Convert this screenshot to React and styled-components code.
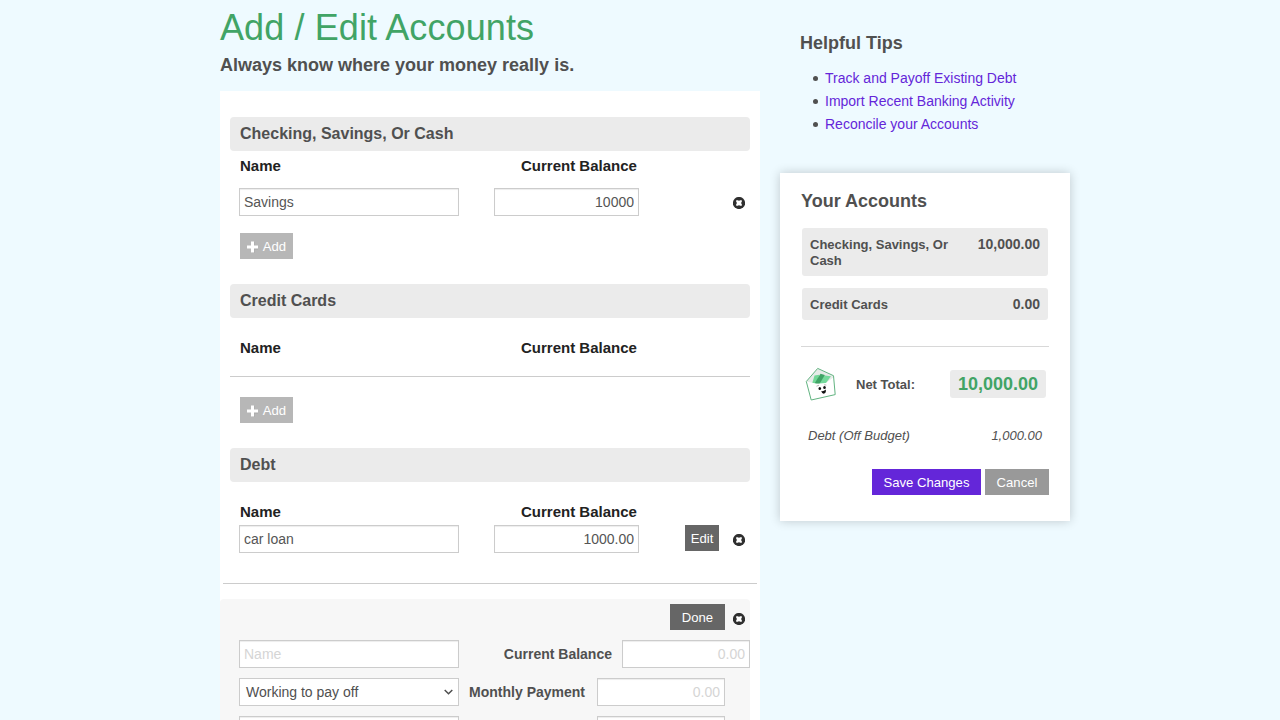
import React from "react";
import styled, { createGlobalStyle } from "styled-components";

const GlobalStyle = createGlobalStyle`
  * { box-sizing: border-box; }
  html, body, #root { height: 100%; }
  body {
    margin: 0;
    overflow: hidden;
    background: #eefaff;
    color: #505050;
    font-family: "Liberation Sans", Arial, sans-serif;
    font-size: 14px;
  }
  h1, h2, h3, ul { margin: 0; padding: 0; }
`;

const Page = styled.div`
  display: flex;
  gap: 20px;
  width: 850px;
  height: 720px;
  margin-left: 220px;
`;

const Main = styled.main`
  display: flex;
  flex-direction: column;
  width: 540px;
  height: 720px;
  flex: none;
`;

const Header = styled.header`
  height: 91px;
  flex: none;
  padding-top: 8px;
`;

const Title = styled.h1`
  font-size: 36px;
  line-height: 40px;
  font-weight: 400;
  letter-spacing: 0.1px;
  color: #41a466;
`;

const Subtitle = styled.h2`
  margin-top: 5px;
  font-size: 18px;
  line-height: 24px;
`;

const Panel = styled.div`
  display: flex;
  flex-direction: column;
  flex: 1;
  min-height: 0;
  overflow: hidden;
  background: #fff;
  padding-top: 26px;
`;

const Section = styled.section`
  flex: none;
  margin: 0 10px ${(p) => p.$bottom}px;
`;

const SectionHeading = styled.h3`
  height: 34px;
  padding-left: 10px;
  border-radius: 4px;
  background: #ebebeb;
  font-size: 16px;
  line-height: 33px;
`;

const Labels = styled.div`
  display: grid;
  grid-template-columns: 281px auto;
  padding: ${(p) => p.$top}px 10px 0;
  font-size: 15px;
  line-height: 18px;
  font-weight: 700;
  color: #222;
`;

const Row = styled.div`
  display: flex;
  align-items: center;
  height: 28px;
  margin-top: ${(p) => p.$top}px;
  padding-left: 9px;
`;

const Input = styled.input`
  width: ${(p) => p.$w}px;
  height: 28px;
  flex: none;
  margin: 0 0 0 ${(p) => p.$left || 0}px;
  padding: 0 4px;
  border: 1px solid #ccc;
  border-radius: 0;
  background: #fff;
  box-shadow: inset 0 1px 1px rgba(0, 0, 0, 0.075);
  color: #555;
  font: 14px "Liberation Sans", Arial, sans-serif;
  text-align: ${(p) => (p.$right ? "right" : "left")};
  &::placeholder { color: #d5d5d5; opacity: 1; }
`;

const tones = {
  add: "#b7b7b7",
  dark: "#666",
  primary: "#6426d9",
  muted: "#999",
};

const Button = styled.button`
  display: flex;
  align-items: center;
  justify-content: center;
  flex: none;
  width: ${(p) => p.$w}px;
  height: 26px;
  padding: 1px 0 0;
  border: 0;
  background: ${(p) => tones[p.$tone]};
  color: #fff;
  font: 13.1px/26px "Liberation Sans", Arial, sans-serif;
`;

const AddButton = styled(Button)`
  margin: ${(p) => p.$top}px 0 0 10px;
  svg { margin: 1px 4px 0 0; }
`;

const EditButton = styled(Button)`
  margin: 0 14px 2px auto;
`;

const RemoveButton = styled.span`
  display: flex;
  width: 12px;
  height: 12px;
  margin: ${(p) => p.$top}px 5px 0 ${(p) => (p.$push ? "auto" : "0")};
`;

const Divider = styled.div`
  height: 1px;
  flex: none;
  margin: ${(p) => p.$m};
  background: ${(p) => p.$color || "#ccc"};
`;

const DebtForm = styled.div`
  width: 530px;
  flex: 1;
  min-height: 0;
  overflow: hidden;
  padding: 5px 0 0 10px;
  border-radius: 4px 4px 0 0;
  background: #f7f7f7;
`;

const FormActions = styled.div`
  display: flex;
  justify-content: flex-end;
  align-items: center;
  gap: 8px;
  height: 26px;
`;

const FieldLabel = styled.label`
  width: ${(p) => p.$w}px;
  text-align: right;
  font-weight: 700;
`;

const SelectBox = styled.div`
  display: flex;
  align-items: center;
  justify-content: space-between;
  width: 220px;
  height: 28px;
  flex: none;
  padding: 0 5px 0 6px;
  border: 1px solid #ccc;
  background: #fff;
`;

const Side = styled.aside`
  width: 290px;
  flex: none;
  padding-top: 31px;
`;

const Tips = styled.section`
  height: 142px;
  padding-left: 20px;
`;

const SideHeading = styled.h3`
  font-size: 18px;
  line-height: 24px;
`;

const TipList = styled.ul`
  margin-top: 12px;
  padding-left: 13px;
  line-height: 23px;
  list-style: none;
`;

const Tip = styled.li`
  display: flex;
  align-items: center;
  &::before {
    content: "";
    width: 5px;
    height: 5px;
    margin: 0 7px 0 0;
    border-radius: 50%;
    background: #505050;
  }
`;

const TipLink = styled.a`
  color: #6426d9;
`;

const Card = styled.section`
  height: 348px;
  padding: 16px 21px 0;
  background: #fff;
  box-shadow: 0 0 10px rgba(0, 0, 0, 0.2);
`;

const Summary = styled.div`
  display: flex;
  justify-content: space-between;
  margin: ${(p) => p.$top}px 1px 0;
  padding: 8px;
  border-radius: 3px;
  background: #ebebeb;
  font-size: 13px;
  line-height: 16px;
  font-weight: 700;
`;

const SummaryName = styled.span`
  width: 145px;
  padding-top: 1px;
  margin-bottom: -1px;
`;

const SummaryAmount = styled.span`
  font-size: 14px;
`;

const NetTotal = styled.div`
  display: flex;
  align-items: center;
  height: 36px;
  margin-top: 19px;
  padding: 0 3px;
`;

const NetLabel = styled.span`
  margin: 1px auto 0 18px;
  font-size: 13px;
  font-weight: 700;
`;

const NetAmount = styled.span`
  height: 28px;
  padding: 0 8px;
  border-radius: 3px;
  background: #ebebeb;
  color: #41a466;
  font-size: 18px;
  line-height: 28px;
  font-weight: 700;
`;

const OffBudget = styled.div`
  display: flex;
  justify-content: space-between;
  margin-top: 25px;
  padding: 0 7px;
  font-size: 13px;
  line-height: 18px;
  font-style: italic;
`;

const CardActions = styled.div`
  display: flex;
  justify-content: flex-end;
  gap: 4px;
  margin-top: 24px;
`;

const Plus = () => (
  <svg width="12" height="12" viewBox="0 0 12 12">
    <path d="M4 4.500h3.500V1h-3V12h3V8.500H11V5z" fill="#999" opacity=".5" />
    <path d="M4 .5h3v4h4v3H7v4H4v-4H0v-3h4z" fill="#fff" />
  </svg>
);

const Remove = ({ push, top = 2 }) => (
  <RemoveButton $push={push} $top={top}>
    <svg width="12" height="12" viewBox="0 0 12 12">
      <circle cx="6" cy="6" r="6.100" fill="#2f2f2f" />
      <path d="M3.200 3.200h1.900L6 4.100l.9-.9h1.900v1.900L7.900 6l.9.9v1.900H6.900L6 7.900l-.9.9H3.200V6.900L4.100 6l-.9-.9z" fill="#fff" />
    </svg>
  </RemoveButton>
);

const Chevron = () => (
  <svg width="9" height="6" viewBox="0 0 9 6" fill="none" stroke="#505050" strokeWidth="1.500">
    <path d="M.7 1 4.500 4.800 8.300 1" />
  </svg>
);

const Envelope = () => (
  <svg width="34" height="36" viewBox="0 0 34 36">
    <g transform="translate(0 1)">
      <path d="M2.300 14.500 13.700 1.400 29.500 8.700 31.200 27.600 7.200 33z" fill="#fff" />
      <path d="M2.300 14.500 13.700 1.400 29.500 8.700 29.500 11 23 16 5 17z" fill="#e6ebe8" />
      <path d="M10.500 8.500 15.500 7.700 12.500 17 8.300 16z" fill="#71d796" />
      <path d="m19 8.200 8 1-5.500 7.500-7.500.3z" fill="#75d99b" />
      <path d="m16.500 6.800 4.300 1.200-5.300 9-5-.5z" fill="#40a466" />
      <path d="M2.300 14.500 13 16.800 22 16 29.500 10.200 31.200 27.600 7.200 33z" fill="#fff" />
      <path d="M2.300 14.500 13.700 1.400 29.500 8.700 31.200 27.600 7.200 33z" fill="none" stroke="#62b481" strokeWidth="1" />
      <path d="M12.500 19.200l2.500-1M20 17.800l2.300.3" fill="none" stroke="#999" strokeWidth=".7" />
      <ellipse cx="15.800" cy="21.600" rx="1.300" ry="1.500" fill="#111" />
      <ellipse cx="20.500" cy="20.600" rx="1.300" ry="1.500" fill="#111" />
      <path d="M17.200 24q2.200.6 4.600-1.500.6 4-2.200 4.200-1.600 0-2.400-2.700" fill="#111" />
    </g>
  </svg>
);

const ColumnLabels = ({ top }) => (
  <Labels $top={top}>
    <span>Name</span>
    <span>Current Balance</span>
  </Labels>
);

export default function App() {
  return (
    <>
      <GlobalStyle />
      <Page>
        <Main>
          <Header>
            <Title>Add / Edit Accounts</Title>
            <Subtitle>Always know where your money really is.</Subtitle>
          </Header>
          <Panel>
            <Section $bottom={25}>
              <SectionHeading>Checking, Savings, Or Cash</SectionHeading>
              <ColumnLabels top={6} />
              <Row $top={13}>
                <Input $w={220} defaultValue="Savings" />
                <Input $w={145} $left={35} $right defaultValue="10000" />
                <Remove push />
              </Row>
              <AddButton $w={53} $tone="add" $top={17}><Plus />Add</AddButton>
            </Section>

            <Section $bottom={25}>
              <SectionHeading>Credit Cards</SectionHeading>
              <ColumnLabels top={21} />
              <Divider $m="19px 0 0" />
              <AddButton $w={53} $tone="add" $top={20}><Plus />Add</AddButton>
            </Section>

            <Section $bottom={0}>
              <SectionHeading>Debt</SectionHeading>
              <ColumnLabels top={21} />
              <Row $top={4}>
                <Input $w={220} defaultValue="car loan" />
                <Input $w={145} $left={35} $right defaultValue="1000.00" />
                <EditButton $w={34} $tone="dark">Edit</EditButton>
                <Remove />
              </Row>
            </Section>
            <Divider $m="30px 3px 15px" />

            <DebtForm>
              <FormActions>
                <Button $w={55} $tone="dark">Done</Button>
                <Remove top={4} />
              </FormActions>
              <Row $top={10}>
                <Input $w={220} placeholder="Name" />
                <FieldLabel $w={153}>Current Balance</FieldLabel>
                <Input $w={128} $left={10} $right placeholder="0.00" />
              </Row>
              <Row $top={10}>
                <SelectBox>Working to pay off<Chevron /></SelectBox>
                <FieldLabel $w={126}>Monthly Payment</FieldLabel>
                <Input $w={128} $left={12} $right placeholder="0.00" />
              </Row>
              <Row $top={10}>
                <Input $w={220} />
                <Input $w={128} $left={138} $right />
              </Row>
            </DebtForm>
          </Panel>
        </Main>

        <Side>
          <Tips>
            <SideHeading>Helpful Tips</SideHeading>
            <TipList>
              <Tip><TipLink>Track and Payoff Existing Debt</TipLink></Tip>
              <Tip><TipLink>Import Recent Banking Activity</TipLink></Tip>
              <Tip><TipLink>Reconcile your Accounts</TipLink></Tip>
            </TipList>
          </Tips>
          <Card>
            <SideHeading>Your Accounts</SideHeading>
            <Summary $top={15}>
              <SummaryName>Checking, Savings, Or Cash</SummaryName>
              <SummaryAmount>10,000.00</SummaryAmount>
            </Summary>
            <Summary $top={12}>
              <SummaryName>Credit Cards</SummaryName>
              <SummaryAmount>0.00</SummaryAmount>
            </Summary>
            <Divider $m="26px 0 0" $color="#d8d8d8" />
            <NetTotal>
              <Envelope />
              <NetLabel>Net Total:</NetLabel>
              <NetAmount>10,000.00</NetAmount>
            </NetTotal>
            <OffBudget>
              <span>Debt (Off Budget)</span>
              <span>1,000.00</span>
            </OffBudget>
            <CardActions>
              <Button $w={109} $tone="primary">Save Changes</Button>
              <Button $w={64} $tone="muted">Cancel</Button>
            </CardActions>
          </Card>
        </Side>
      </Page>
    </>
  );
}
